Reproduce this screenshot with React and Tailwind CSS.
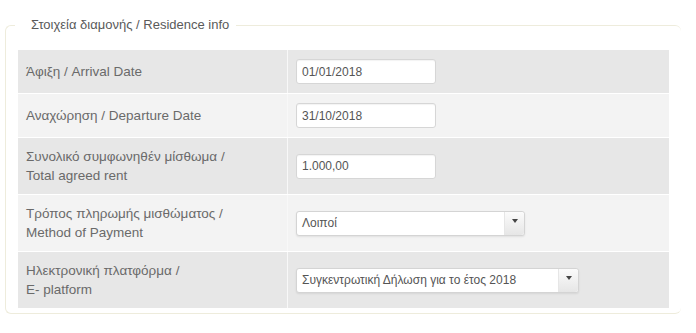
import React from "react";

const font = { fontFamily: '"Liberation Sans", Arial, sans-serif' };

function TextBox({ value }) {
  return (
    <div className="w-[140px] h-[25px] bg-white border border-[#d6d6d6] rounded-[3px] shadow-[inset_0_1px_1px_rgba(0,0,0,0.05)] flex items-center pl-[5px] text-[12px] text-[#555]">
      {value}
    </div>
  );
}

function SelectBox({ value, width }) {
  return (
    <div
      className="h-[25px] bg-white border border-[#d4d4d4] rounded-[3px] shadow-[0_1px_2px_rgba(0,0,0,0.08)] flex items-stretch text-[12px] text-[#555]"
      style={{ width }}
    >
      <div className="flex-1 flex items-center pl-[5px]">{value}</div>
      <div className="w-[20px] border-l border-[#e6e6e6] rounded-r-[3px] bg-gradient-to-b from-[#fbfbfb] to-[#e6e6e6] flex justify-center pt-[7px]">
        <div className="w-0 h-0 border-l-[3px] border-r-[3px] border-t-[4px] border-l-transparent border-r-transparent border-t-[#444]" />
      </div>
    </div>
  );
}

const rows = [
  { label: ["Άφιξη / Arrival Date"], field: <TextBox value="01/01/2018" />, dark: true },
  { label: ["Αναχώρηση / Departure Date"], field: <TextBox value="31/10/2018" />, dark: false },
  { label: ["Συνολικό συμφωνηθέν μίσθωμα /", "Total agreed rent"], field: <TextBox value="1.000,00" />, dark: true },
  { label: ["Τρόπος πληρωμής μισθώματος /", "Method of Payment"], field: <SelectBox value="Λοιποί" width={229} />, dark: false },
  { label: ["Ηλεκτρονική πλατφόρμα /", "E- platform"], field: <SelectBox value="Συγκεντρωτική Δήλωση για το έτος 2018" width={283} />, dark: true },
];

export default function App() {
  return (
    <div className="w-[696px] h-[333px] bg-white pt-[25px] pl-[5px]" style={font}>
      <div className="relative w-[676px] border border-r-0 border-[#eeecdc] rounded-[6px] px-[12px] pb-[4px] pt-[24px]">
        <div className="absolute left-[9px] top-[-9px] bg-white pl-[16px] pr-[7px] text-[13px] leading-[16px] text-[#5a5a5a]">
          Στοιχεία διαμονής / Residence info
        </div>
        <div className="flex flex-col">
          {rows.map((r, i) => (
            <div
              key={i}
              className={`flex border-b border-white ${r.dark ? "bg-[#e7e7e7]" : "bg-[#f3f3f3]"}`}
            >
              <div className="w-[270px] border-r border-[#f8f8f8] pl-[8px] flex flex-col justify-center text-[13.5px] leading-[19px] text-[#6a6a6a] py-[9px]">
                {r.label.map((l, j) => (
                  <div key={j}>{l}</div>
                ))}
              </div>
              <div className="flex-1 pl-[8px] flex items-center py-[9px]">{r.field}</div>
            </div>
          ))}
        </div>
      </div>
    </div>
  );
}
